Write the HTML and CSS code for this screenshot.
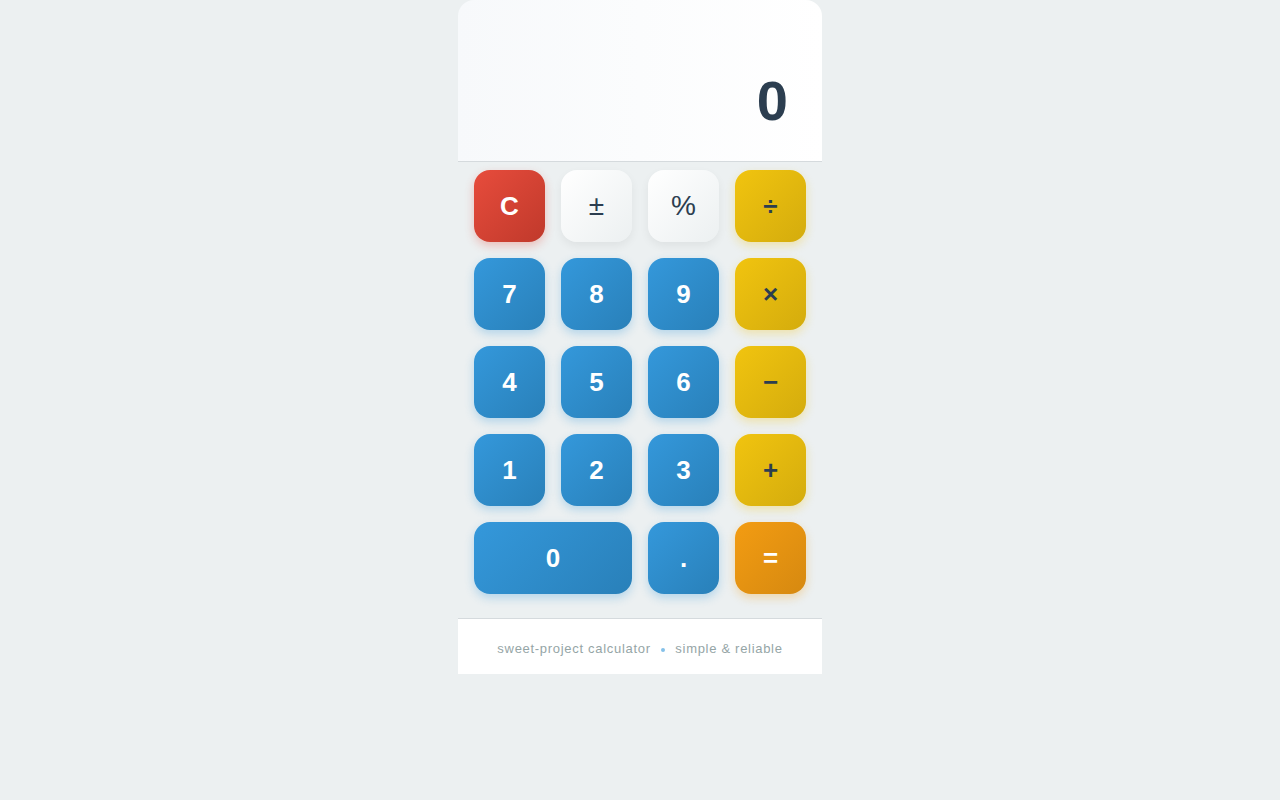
FILE: index.html
```html
<!DOCTYPE html>
<html lang="en">
<head>
    <meta charset="UTF-8">
    <meta name="viewport" content="width=device-width, initial-scale=1.0">
    <title>Calculator</title>
    <link rel="stylesheet" href="styles.css">
</head>
<body>
    <div class="calculator">
        <div class="display">
            <span id="result">0</span>
        </div>
        <div class="keypad">
            <button class="key key-clear">C</button>
            <button class="key key-func">&plusmn;</button>
            <button class="key key-func">%</button>
            <button class="key key-op">&divide;</button>

            <button class="key key-num">7</button>
            <button class="key key-num">8</button>
            <button class="key key-num">9</button>
            <button class="key key-op">&times;</button>

            <button class="key key-num">4</button>
            <button class="key key-num">5</button>
            <button class="key key-num">6</button>
            <button class="key key-op">&minus;</button>

            <button class="key key-num">1</button>
            <button class="key key-num">2</button>
            <button class="key key-num">3</button>
            <button class="key key-op">+</button>

            <button class="key key-num key-wide">0</button>
            <button class="key key-num">.</button>
            <button class="key key-equals">=</button>
        </div>
        <div class="footer">
            sweet-project calculator <span class="dot"></span> simple &amp; reliable
        </div>
    </div>
</body>
</html>
```

FILE: styles.css
```css
body, html {
    margin: 0;
    padding: 0;
    background-color: #ecf0f1;
    font-family: "Liberation Sans", Arial, sans-serif;
}
.calculator {
    width: 364px;
    margin: 0 auto;
}
.display {
    height: 162px;
    box-sizing: border-box;
    padding: 0 34px 27px 24px;
    display: flex;
    justify-content: flex-end;
    align-items: flex-end;
    background: linear-gradient(90deg, #f7f9fb, #ffffff);
    border-radius: 16px 16px 0 0;
    border-bottom: 1px solid #d5dadd;
}
#result {
    font-size: 56px;
    font-weight: bold;
    color: #2c3e50;
    line-height: 1.2;
}
.keypad {
    display: grid;
    grid-template-columns: repeat(4, 71px);
    grid-auto-rows: 72px;
    gap: 16px;
    padding: 8px 16px 24px;
}
.key {
    border: none;
    border-radius: 16px;
    font-family: inherit;
    font-size: 26px;
    font-weight: bold;
    color: #fff;
    cursor: pointer;
    padding: 0;
}
.key-wide {
    grid-column: span 2;
}
.key-num {
    background: linear-gradient(135deg, #3498db, #2980b9);
    box-shadow: 0 4px 10px rgba(52, 152, 219, 0.3);
}
.key-clear {
    background: linear-gradient(135deg, #e74c3c, #c0392b);
    box-shadow: 0 4px 10px rgba(231, 76, 60, 0.3);
}
.key-func {
    background: linear-gradient(135deg, #ffffff, #ecf0f1);
    color: #2c3e50;
    font-weight: normal;
    font-size: 28px;
    box-shadow: 0 4px 10px rgba(0, 0, 0, 0.06);
}
.key-op {
    background: linear-gradient(135deg, #f1c40f, #d4ac0d);
    color: #2c3e50;
    box-shadow: 0 4px 10px rgba(241, 196, 15, 0.3);
}
.key-equals {
    background: linear-gradient(135deg, #f39c12, #d68910);
    box-shadow: 0 4px 10px rgba(243, 156, 18, 0.3);
}
.footer {
    background: #fff;
    border-top: 1px solid #d5dadd;
    padding: 22px 0 18px;
    line-height: 15px;
    text-align: center;
    font-size: 13px;
    letter-spacing: 0.7px;
    color: #95a5a6;
}
.dot {
    display: inline-block;
    width: 4px;
    height: 4px;
    border-radius: 50%;
    background: #85c1e9;
    margin: 0 6px;
    vertical-align: middle;
}
```
